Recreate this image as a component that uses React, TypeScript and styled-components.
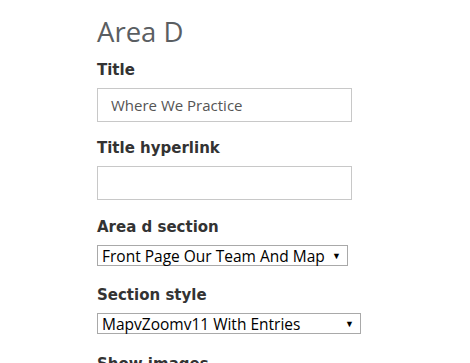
import React from "react";
import styled, { createGlobalStyle } from "styled-components";

const Global = createGlobalStyle`
  html, body { margin: 0; padding: 0; background: #fff; }
  body { overflow: hidden; }
`;

const Page = styled.div`
  width: 470px;
  height: 363px;
  overflow: hidden;
  padding: 13px 0 0 97px;
  box-sizing: border-box;
  display: flex;
  flex-direction: column;
`;

const Heading = styled.h1`
  margin: 0;
  font-family: "Open Sans", sans-serif;
  font-weight: 400;
  font-size: 27.5px;
  line-height: 38px;
  color: #5a5e62;
`;

const Field = styled.div<{ $mt: number }>`
  display: flex;
  flex-direction: column;
  margin-top: ${(p) => p.$mt}px;
`;

const Label = styled.label`
  font-family: "DejaVu Sans", Verdana, sans-serif;
  font-weight: 700;
  font-size: 15px;
  line-height: 18px;
  color: #333;
`;

const TextInput = styled.div`
  box-sizing: border-box;
  margin-top: 9px;
  width: 255px;
  height: 34px;
  border: 1px solid #c8c8c8;
  padding: 0 13px;
  display: flex;
  align-items: center;
  font-family: "Open Sans", sans-serif;
  font-size: 15px;
  color: #555;
`;

const Select = styled.div<{ $w: number }>`
  box-sizing: border-box;
  margin-top: 9px;
  width: ${(p) => p.$w}px;
  height: 21px;
  border: 1px solid #a9a9a9;
  padding: 0 6px 0 4px;
  display: flex;
  align-items: center;
  justify-content: space-between;
  font-family: "Open Sans", sans-serif;
  font-size: 15.5px;
  color: #000;
  white-space: nowrap;
`;

const Arrow = styled.span`
  font-size: 9px;
  color: #000;
`;

export default function App() {
  return (
    <>
      <Global />
      <Page>
        <Heading>Area D</Heading>
        <Field $mt={10}>
          <Label>Title</Label>
          <TextInput>Where We Practice</TextInput>
        </Field>
        <Field $mt={17}>
          <Label>Title hyperlink</Label>
          <TextInput />
        </Field>
        <Field $mt={18}>
          <Label>Area d section</Label>
          <Select $w={251}>
            <span>Front Page Our Team And Map</span>
            <Arrow>▼</Arrow>
          </Select>
        </Field>
        <Field $mt={20}>
          <Label>Section style</Label>
          <Select $w={264}>
            <span>MapvZoomv11 With Entries</span>
            <Arrow>▼</Arrow>
          </Select>
        </Field>
        <Field $mt={21}>
          <Label>Show images</Label>
        </Field>
      </Page>
    </>
  );
}
